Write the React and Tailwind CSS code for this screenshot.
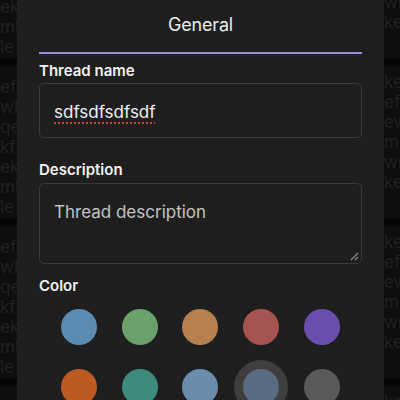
const leftLines = ["efo", "wlk", "qe", "kf", "ek", "mk", "le"];
const rightLines = ["ke", "efr", "ew", "m", "wr", "ke"];

const colors = [
  "bg-[#5b8bb1]",
  "bg-[#6aa069]",
  "bg-[#b6814f]",
  "bg-[#a65451]",
  "bg-[#6a4fae]",
  "bg-[#bd5a24]",
  "bg-[#3d8c7f]",
  "bg-[#6a8dac]",
  "bg-[#5b6b82]",
  "bg-[#5a5a5a]",
];

const MessageBlock = () => {
  return (
    <div className="flex flex-col">
      <div className="h-[152px] flex justify-between bg-[#0e0e0e] text-[17px] leading-[20px] text-[#212121]">
        <div className="w-[17px] overflow-hidden pt-[11px] whitespace-nowrap">
          {leftLines.map((t, i) => (
            <div key={i}>{t}</div>
          ))}
        </div>
        <div className="w-[16px] overflow-hidden pt-[6px] whitespace-nowrap">
          {rightLines.map((t, i) => (
            <div key={i}>{t}</div>
          ))}
        </div>
      </div>
      <div className="h-[8px] bg-[#070707]"></div>
    </div>
  );
};

const App = () => {
  return (
    <div className="relative w-[400px] h-[400px] overflow-hidden bg-[#0e0e0e] font-['Inter','Noto_Sans',sans-serif]">
      <div className="-mt-[94px]">
        <MessageBlock />
        <MessageBlock />
        <MessageBlock />
        <MessageBlock />
      </div>

      <div className="absolute top-0 bottom-0 left-[17px] w-[367px] bg-[#1f1f1f] px-[22px]">
        <div className="pt-[13px] text-center text-[18px] leading-[24px] tracking-[-0.01em] text-[#ececec]">General</div>
        <div className="mt-[15px] h-[2px] bg-[#9d8fd6]"></div>

        <div className="mt-[7px] text-[15px] leading-[20px] font-semibold text-[#f2f2f2]">Thread name</div>
        <div className="mt-[2px] h-[55px] rounded-[5px] border border-[#3a3a3a] px-[14px] pt-[5px] flex items-center">
          <span className="text-[17px] text-[#f0f0f0] underline decoration-dotted decoration-[#d0413c] decoration-2 underline-offset-[4px]">
            sdfsdfsdfsdf
          </span>
        </div>

        <div className="mt-[22px] text-[15px] leading-[20px] font-semibold text-[#f2f2f2]">Description</div>
        <div className="relative mt-[3px] h-[81px] rounded-[5px] border border-[#3a3a3a] px-[14px] pt-[16px]">
          <span className="text-[17px] leading-[22px] text-[#c4c4c4]">Thread description</span>
          <svg className="absolute right-[2px] bottom-[2px]" width="10" height="10" viewBox="0 0 10 10">
            <path d="M9 2 L2 9 M9 6 L6 9" stroke="#8c8c8c" strokeWidth="1.2" fill="none" />
          </svg>
        </div>

        <div className="mt-[12px] text-[15px] leading-[20px] font-semibold text-[#f2f2f2]">Color</div>
        <div className="mt-[13px] px-[10px] grid grid-cols-5 gap-y-[24px] justify-items-center">
          {colors.map((c, i) => (
            <div
              key={i}
              className={`w-[36px] h-[36px] rounded-full ${c} ${i === 8 ? "ring-[9px] ring-[#3e3e3e]" : ""}`}
            ></div>
          ))}
        </div>
      </div>
    </div>
  );
};

export default App;
